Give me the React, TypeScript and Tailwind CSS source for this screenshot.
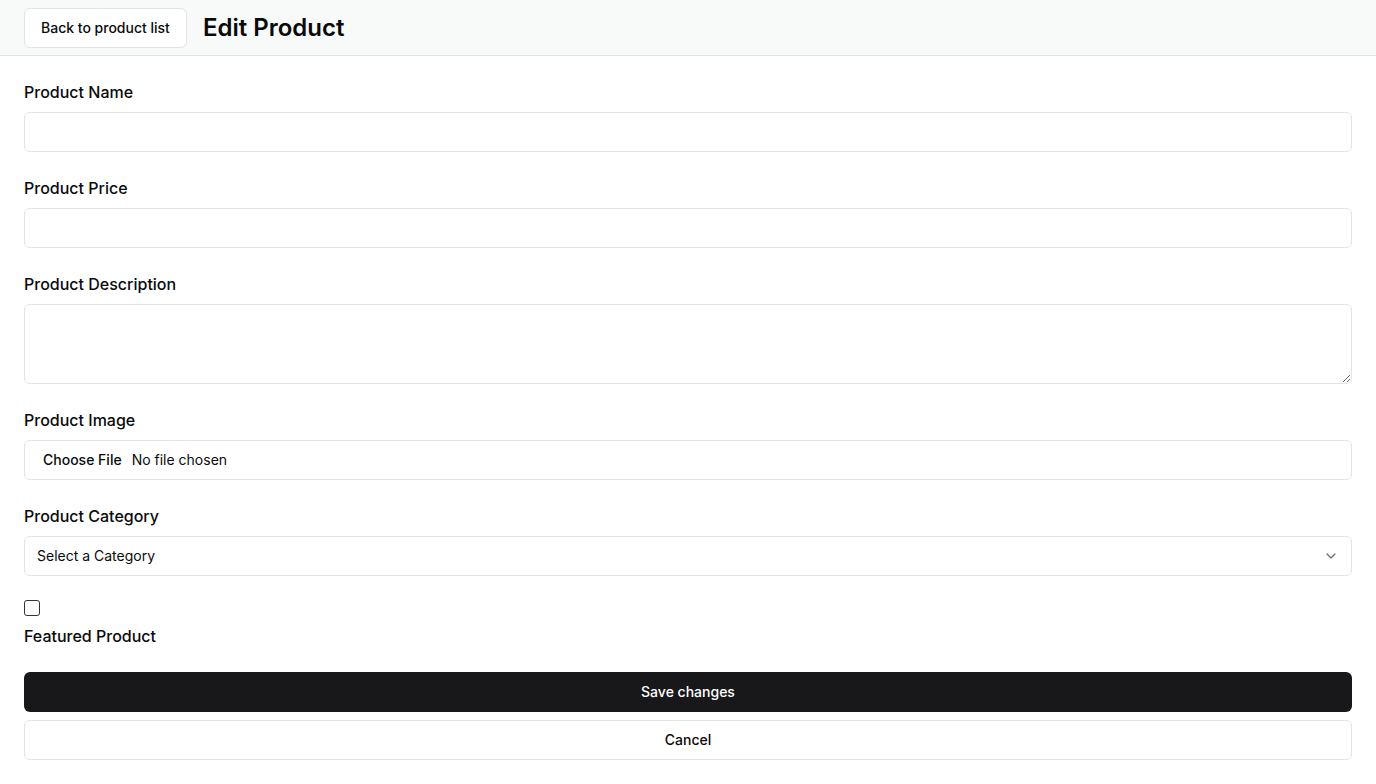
import React from "react";

function Field({ label, children }: { label: string; children: React.ReactNode }) {
  return (
    <div className="flex flex-col gap-2">
      <label className="text-base font-medium leading-6 text-[#0a0a0a]">{label}</label>
      {children}
    </div>
  );
}

export default function App() {
  return (
    <div className="min-h-screen bg-white text-[#0a0a0a]" style={{ fontFamily: "Inter, 'Noto Sans', sans-serif" }}>
      <header className="flex h-14 items-center gap-4 border-b border-[#e4e4e7] bg-[#f8f9f9] px-6">
        <button className="h-10 rounded-md border border-[#e4e4e7] bg-white px-4 text-sm font-medium">
          Back to product list
        </button>
        <h1 className="text-2xl font-semibold">Edit Product</h1>
      </header>
      <main className="flex flex-col gap-6 p-6">
        <Field label="Product Name">
          <input className="h-10 w-full rounded-md border border-[#e4e4e7] bg-white px-3 text-sm outline-none" />
        </Field>
        <Field label="Product Price">
          <input className="h-10 w-full rounded-md border border-[#e4e4e7] bg-white px-3 text-sm outline-none" />
        </Field>
        <Field label="Product Description">
          <textarea className="block h-20 w-full rounded-md border border-[#e4e4e7] bg-white px-3 py-2 text-sm outline-none" />
        </Field>
        <Field label="Product Image">
          <div className="flex h-10 w-full items-center rounded-md border border-[#e4e4e7] bg-white pl-[18px] text-sm">
            <span className="font-medium">Choose File</span>
            <span className="ml-[10px]">No file chosen</span>
          </div>
        </Field>
        <Field label="Product Category">
          <div className="flex h-10 w-full items-center justify-between rounded-md border border-[#e4e4e7] bg-white px-3 text-sm">
            <span>Select a Category</span>
            <svg width="16" height="16" viewBox="0 0 24 24" fill="none" stroke="#71717a" strokeWidth="2" strokeLinecap="round" strokeLinejoin="round">
              <path d="m6 9 6 6 6-6" />
            </svg>
          </div>
        </Field>
        <div className="flex flex-col gap-2">
          <span className="block h-4 w-4 rounded-[3px] border border-[#333]" />
          <label className="text-base font-medium leading-6">Featured Product</label>
        </div>
        <div className="flex flex-col gap-2">
          <button className="h-10 w-full rounded-md bg-[#18181b] text-sm font-medium text-white">Save changes</button>
          <button className="h-10 w-full rounded-md border border-[#e4e4e7] bg-white text-sm font-medium">Cancel</button>
        </div>
      </main>
    </div>
  );
}
